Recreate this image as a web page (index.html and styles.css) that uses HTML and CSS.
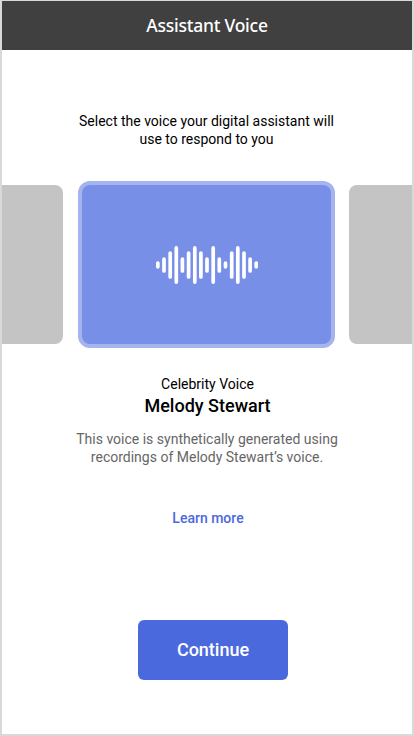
FILE: index.html
```html
<!DOCTYPE html>
<html lang="en">
<head>
<meta charset="utf-8">
<title>Assistant Voice</title>
<link rel="stylesheet" href="styles.css">
</head>
<body>
<main class="screen">
  <header class="header"><h1 class="title">Assistant Voice</h1></header>
  <p class="intro">Select the voice your digital assistant will<br>use to respond to you</p>
  <section class="carousel">
    <div class="card card-prev"></div>
    <div class="card card-active">
      <svg class="wave" width="102" height="38" viewBox="0 0 102 38" fill="none" stroke="#fff" stroke-width="3.7" stroke-linecap="round">
        <path d="M1.85 17.2v3.6M8 13.1v11.8M14.2 7v24M20.3 1.9v34.2M26.4 13.1v11.8M32.6 7v24M38.8 1.9v34.2M44.9 7v24M51 13.1v11.8M57.2 1.9v34.2M63.3 13.1v11.8M69.5 17.2v3.6M75.7 7v24M81.8 1.9v34.2M88 7v24M94.1 13.1v11.8M100.2 17.2v3.6"/>
      </svg>
    </div>
    <div class="card card-next"></div>
  </section>
  <p class="kind">Celebrity Voice</p>
  <h2 class="name">Melody Stewart</h2>
  <p class="description">This voice is synthetically generated using<br>recordings of Melody Stewart’s voice.</p>
  <a class="learn">Learn more</a>
  <button class="continue">Continue</button>
</main>
</body>
</html>
```
FILE: styles.css
```css
* { box-sizing: border-box; }
body { margin: 0; background: #fff; font-family: Roboto, "Liberation Sans", sans-serif; }
h1, h2, p { margin: 0; }
.screen {
  width: 414px;
  height: 736px;
  border: solid #d9d9d9;
  border-width: 1px 2px 2px;
  display: flex;
  flex-direction: column;
  align-items: center;
  text-align: center;
  overflow: hidden;
}
.header {
  width: 100%;
  height: 49px;
  padding-bottom: 2px;
  display: flex;
  align-items: center;
  justify-content: center;
  background: #404040;
}
.title { font: 500 17.5px/24px "Noto Sans", "Open Sans", sans-serif; letter-spacing: -0.24px; color: #fff; }
.intro { margin-top: 62px; padding-right: 1px; font-size: 14px; line-height: 18px; color: #000; }
.carousel {
  width: 100%;
  height: 167px;
  margin-top: 33px;
  display: flex;
  align-items: center;
  gap: 14px;
}
.card { height: 159px; background: #c4c4c4; flex: none; }
.card-prev { width: 61px; border-radius: 0 8px 8px 0; margin-right: 1px; }
.card-next { width: 63px; border-radius: 8px 0 0 8px; }
.card-active {
  width: 257px;
  height: 167px;
  border: 4px solid #a5b3ee;
  border-radius: 12px;
  background: #778fe7;
  display: flex;
  align-items: center;
  justify-content: center;
}
.kind { margin-top: 27px; padding-left: 1px; font-size: 14px; line-height: 18px; color: #000; }
.name { margin-top: 2px; padding-left: 1px; font-size: 18px; font-weight: 500; line-height: 22px; color: #000; }
.description { margin-top: 13px; font-size: 14px; line-height: 18px; color: #666; }
.learn { margin-top: 43px; padding-left: 2px; font-size: 14px; font-weight: 500; line-height: 18px; color: #4a69dd; }
.continue {
  width: 150px;
  height: 60px;
  margin: 93px 0 0 12px;
  padding: 0;
  border: 0;
  border-radius: 6px;
  background: #4a69dd;
  color: #fff;
  font: 500 18px/22px Roboto, sans-serif;
}
```
